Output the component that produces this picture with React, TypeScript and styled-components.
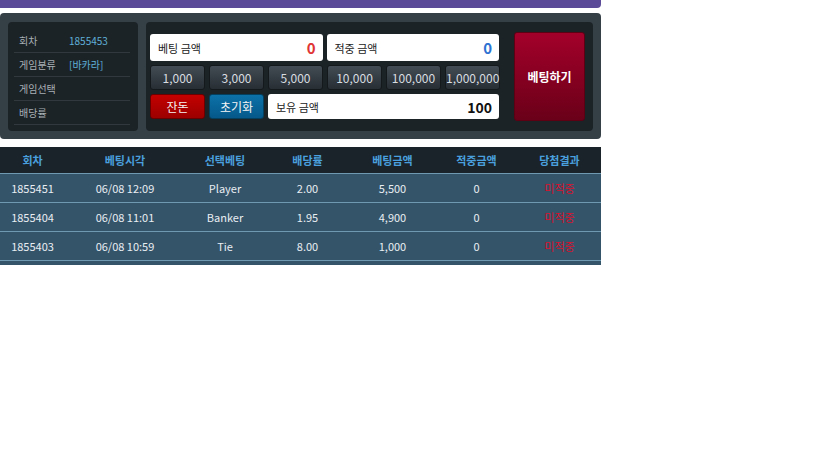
import styled, { createGlobalStyle } from "styled-components";

const GlobalStyle = createGlobalStyle`
  body {
    margin: 0;
    background: #fff;
    font-family: "Noto Sans CJK KR", "Noto Sans", sans-serif;
  }
`;

const Wrapper = styled.div`
  width: 601px;
`;

const TopBar = styled.div`
  height: 8px;
  background: #5a4a98;
  border-radius: 0 0 4px 0;
  margin-bottom: 5px;
`;

const Board = styled.div`
  display: flex;
  gap: 8px;
  padding: 9px 8px 8px 8px;
  background: #353f46;
  border-radius: 4px;
  height: 126px;
  box-sizing: border-box;
`;

const InfoPanel = styled.div`
  width: 130px;
  background: #1c2327;
  border-radius: 4px;
  padding: 7px 8px 0 6px;
  box-sizing: border-box;
`;

const InfoRow = styled.div`
  display: flex;
  align-items: center;
  height: 23px;
  border-bottom: 1px solid #31393e;
  font-size: 10px;
  padding-left: 5px;
`;

const InfoLabel = styled.span`
  width: 50px;
  color: #a9b0b5;
`;

const InfoValue = styled.span`
  color: #5fb0d8;
`;

const BetPanel = styled.div`
  flex: 1;
  display: flex;
  align-items: center;
  background: #1c2327;
  border-radius: 4px;
  padding: 0 8px 0 4px;
`;

const Controls = styled.div`
  width: 349px;
  display: flex;
  flex-direction: column;
  gap: 4px;
`;

const Row = styled.div`
  display: flex;
  gap: 4px;
`;

const AmountBox = styled.div<{ $short?: boolean }>`
  flex: 1;
  height: ${(p) => (p.$short ? "25px" : "27px")};
  background: #fff;
  border-radius: 3px;
  display: flex;
  align-items: center;
  justify-content: space-between;
  padding: 0 7px 0 8px;
  box-sizing: border-box;
`;

const AmountLabel = styled.span`
  font-size: 11px;
  color: #222;
`;

const AmountValue = styled.span<{ $color: string; $size?: number }>`
  font-size: ${(p) => p.$size ?? 15}px;
  font-weight: 700;
  color: ${(p) => p.$color};
`;

const ChipButton = styled.button<{ $kind?: "dark" | "red" | "blue" }>`
  width: 55px;
  height: 25px;
  padding: 0;
  border-radius: 3px;
  border: 1px solid
    ${(p) => (p.$kind === "red" ? "#6a0000" : p.$kind === "blue" ? "#03405f" : "#14191c")};
  background: ${(p) =>
    p.$kind === "red"
      ? "linear-gradient(#c40000, #9c0000)"
      : p.$kind === "blue"
      ? "linear-gradient(#0c72a8, #05588a)"
      : "linear-gradient(#434c54, #272e34)"};
  color: ${(p) => (p.$kind === "dark" || !p.$kind ? "#d8dde0" : "#f4f4f4")};
  font-family: "Noto Sans CJK KR", "Noto Sans", sans-serif;
  font-size: 12px;
  box-sizing: border-box;
  flex-shrink: 0;
`;

const BetButton = styled.button`
  margin-left: auto;
  width: 71px;
  height: 89px;
  border: 1px solid #5c0014;
  border-radius: 3px;
  background: linear-gradient(#a3002a, #6a0019);
  color: #fff;
  font-family: "Noto Sans CJK KR", "Noto Sans", sans-serif;
  font-weight: 700;
  font-size: 12px;
`;

const TableWrap = styled.div`
  margin-top: 8px;
  background: #34546a;
  padding-bottom: 4px;
`;

const Table = styled.table`
  width: 100%;
  border-collapse: collapse;
  font-size: 11px;
  text-align: center;
`;

const Th = styled.th<{ $width: number }>`
  width: ${(p) => p.$width}px;
  height: 26px;
  background: #1a232a;
  color: #4aa0de;
  font-weight: 700;
  font-size: 11px;
  border-bottom: 1px solid #6f98b1;
  padding: 0;
`;

const Td = styled.td<{ $miss?: boolean }>`
  height: 28px;
  color: ${(p) => (p.$miss ? "#d8102c" : "#e9eef2")};
  border-bottom: 1px solid #6f98b1;
  padding: 0;
`;

const info = [
  ["회차", "1855453"],
  ["게임분류", "[바카라]"],
  ["게임선택", ""],
  ["배당률", ""],
];

const chips = ["1,000", "3,000", "5,000", "10,000", "100,000", "1,000,000"];

const columns = [
  ["회차", 65],
  ["베팅시각", 120],
  ["선택베팅", 80],
  ["배당률", 85],
  ["베팅금액", 85],
  ["적중금액", 83],
  ["당첨결과", 83],
] as const;

const history = [
  ["1855451", "06/08 12:09", "Player", "2.00", "5,500", "0"],
  ["1855404", "06/08 11:01", "Banker", "1.95", "4,900", "0"],
  ["1855403", "06/08 10:59", "Tie", "8.00", "1,000", "0"],
];

const App = () => {
  return (
    <Wrapper>
      <GlobalStyle />
      <TopBar />
      <Board>
        <InfoPanel>
          {info.map(([label, value]) => (
            <InfoRow key={label}>
              <InfoLabel>{label}</InfoLabel>
              <InfoValue>{value}</InfoValue>
            </InfoRow>
          ))}
        </InfoPanel>
        <BetPanel>
          <Controls>
            <Row>
              <AmountBox>
                <AmountLabel>베팅 금액</AmountLabel>
                <AmountValue $color="#e03434">0</AmountValue>
              </AmountBox>
              <AmountBox>
                <AmountLabel>적중 금액</AmountLabel>
                <AmountValue $color="#2d72d2">0</AmountValue>
              </AmountBox>
            </Row>
            <Row>
              {chips.map((c) => (
                <ChipButton key={c}>{c}</ChipButton>
              ))}
            </Row>
            <Row>
              <ChipButton $kind="red">잔돈</ChipButton>
              <ChipButton $kind="blue">초기화</ChipButton>
              <AmountBox $short>
                <AmountLabel>보유 금액</AmountLabel>
                <AmountValue $color="#111" $size={14}>
                  100
                </AmountValue>
              </AmountBox>
            </Row>
          </Controls>
          <BetButton>베팅하기</BetButton>
        </BetPanel>
      </Board>
      <TableWrap>
        <Table>
          <thead>
            <tr>
              {columns.map(([name, w]) => (
                <Th key={name} $width={w}>
                  {name}
                </Th>
              ))}
            </tr>
          </thead>
          <tbody>
            {history.map((row) => (
              <tr key={row[0]}>
                {row.map((cell, i) => (
                  <Td key={i}>{cell}</Td>
                ))}
                <Td $miss>미적중</Td>
              </tr>
            ))}
          </tbody>
        </Table>
      </TableWrap>
    </Wrapper>
  );
};

export default App;
